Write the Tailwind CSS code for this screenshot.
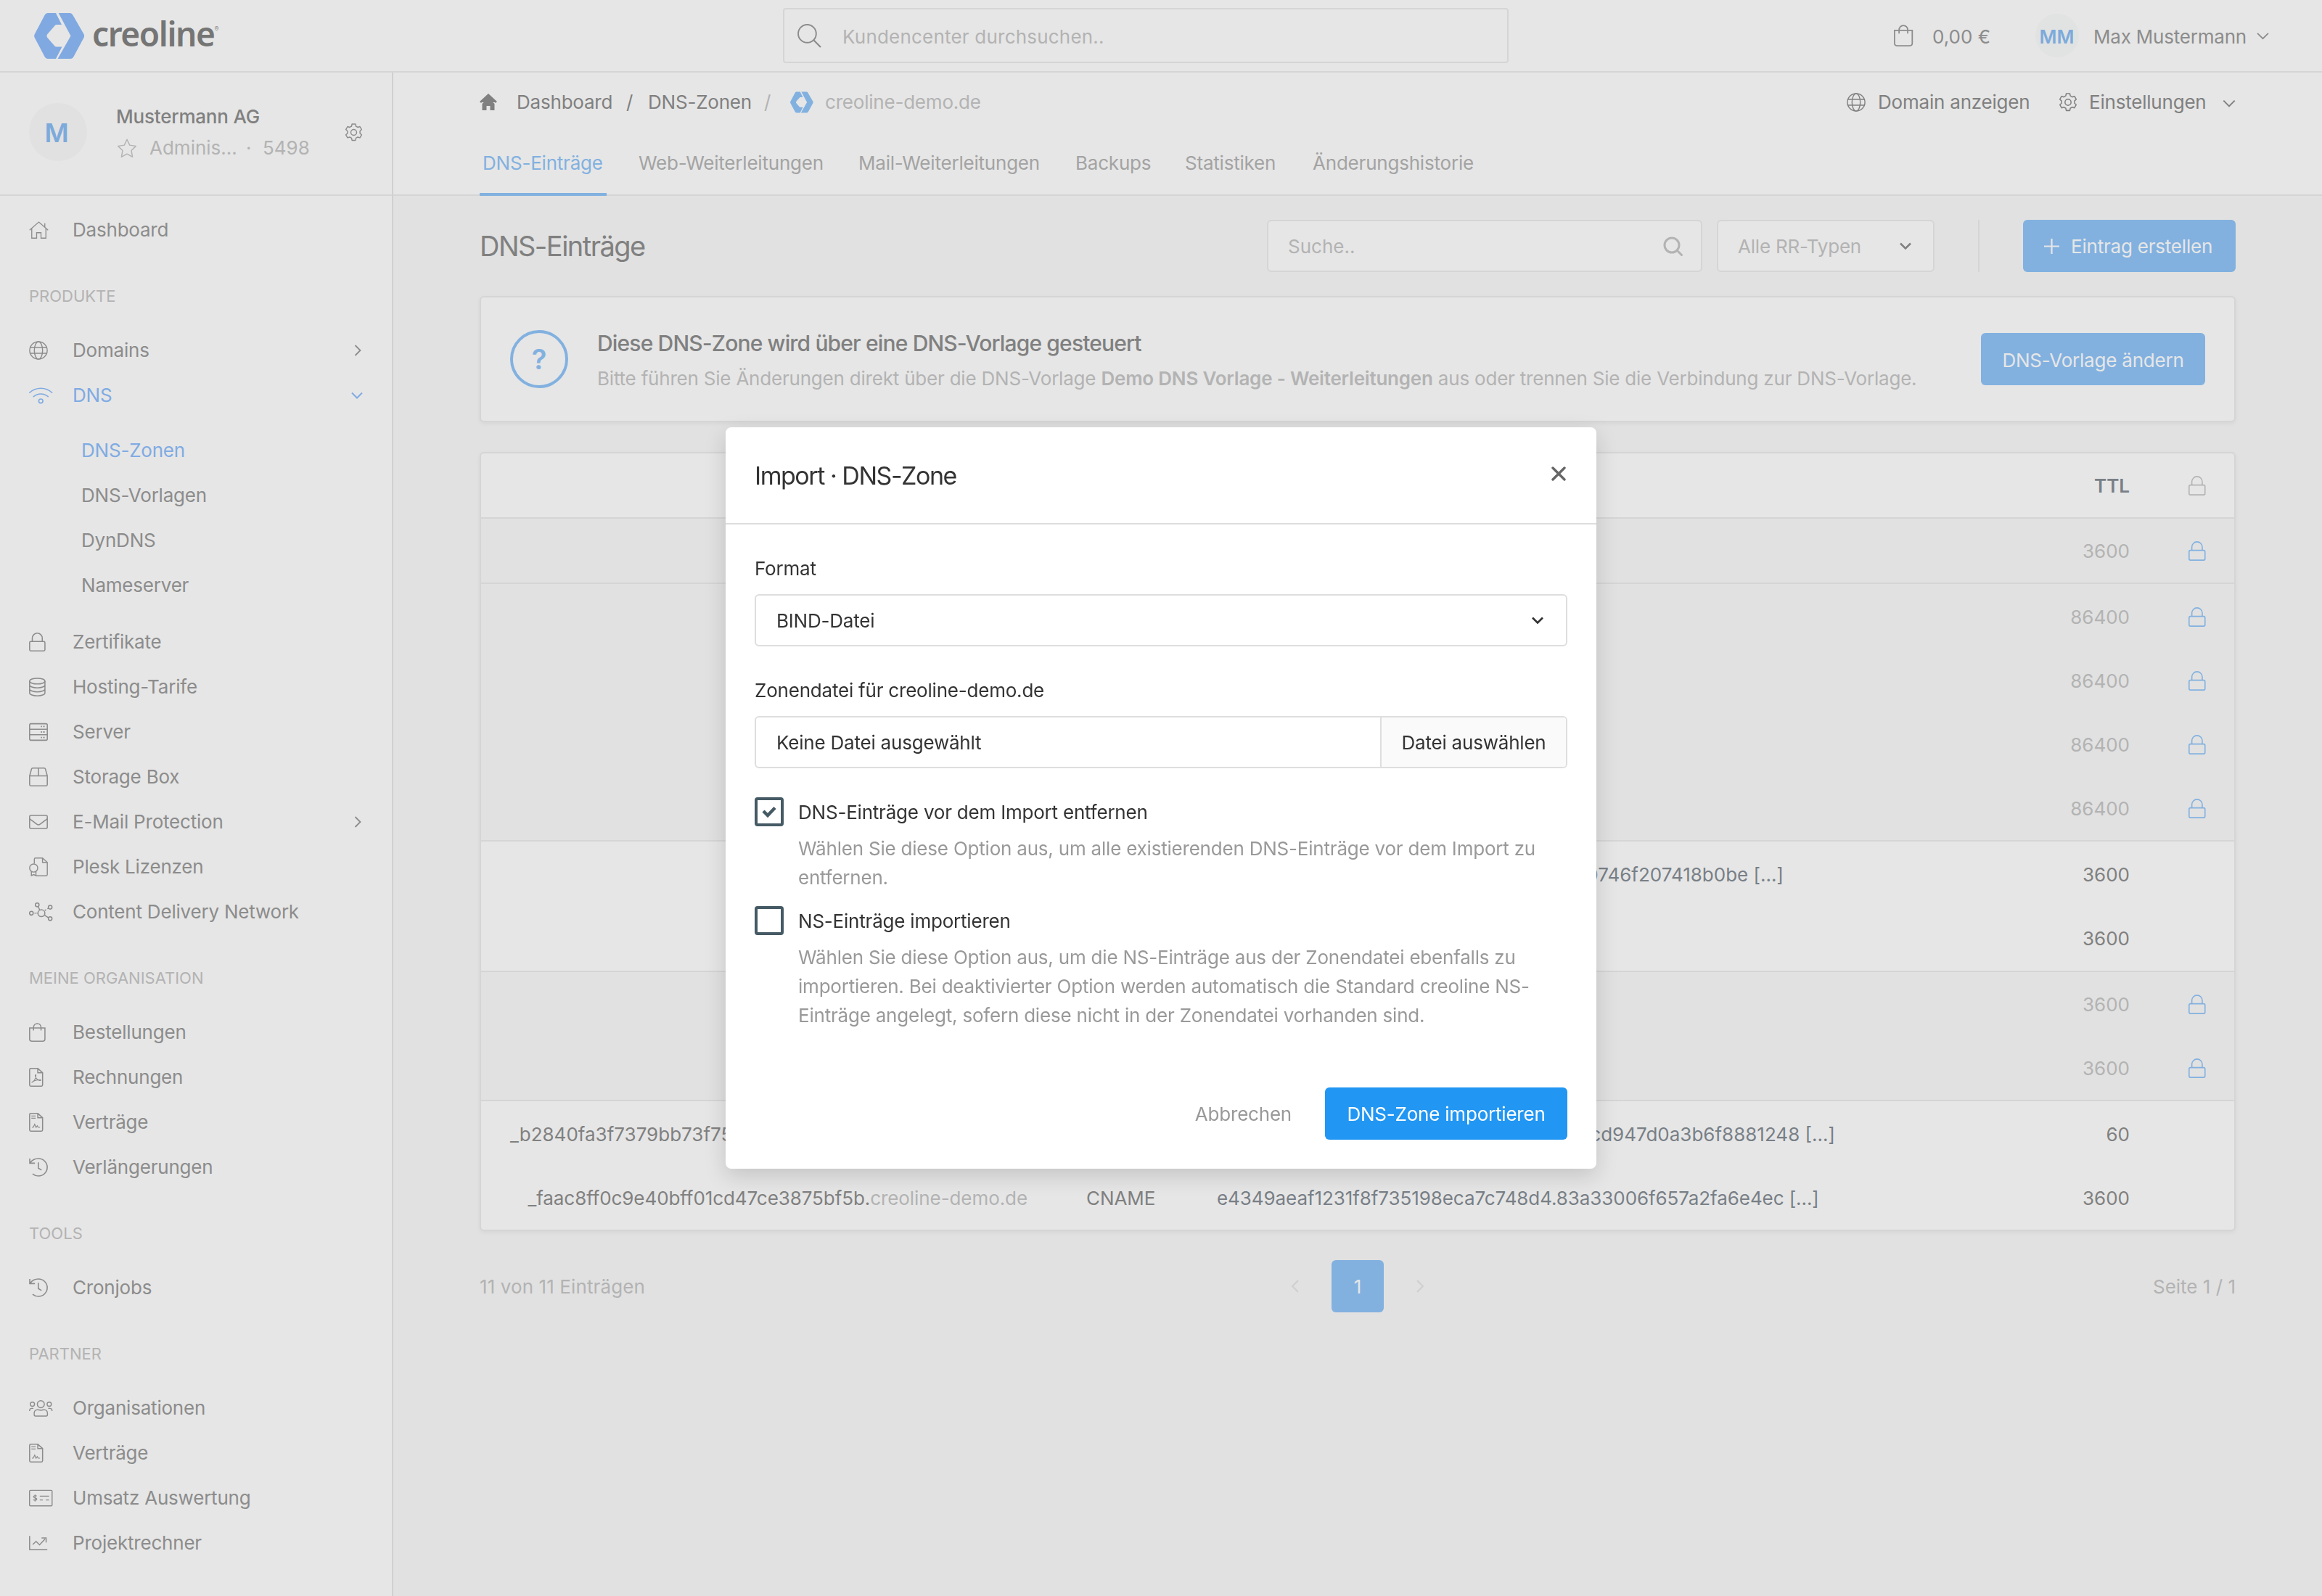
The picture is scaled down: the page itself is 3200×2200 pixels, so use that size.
<!DOCTYPE html>
<html lang="de">

<head>
  <meta charset="UTF-8">
  <meta name="viewport" content="width=device-width, initial-scale=1.0">
  <title>DNS-Einträge · creoline-demo.de</title>
  <script src="https://cdn.jsdelivr.net/npm/@tailwindcss/browser@4"></script>
</head>

<body class="h-[2200px] w-[3200px] overflow-hidden bg-[#e1e1e1] fill-none stroke-current font-['Inter',sans-serif] text-[26px] leading-[40px] tracking-[-0.008em] text-[#808080]">

  <!-- Icons -->
  <svg class="hidden">
    <symbol id="home" viewBox="0 0 576 512" preserveAspectRatio="xMinYMid"><path d="M16 262 288 24l272 238M80 214v282h144V336h128v160h144V214M464 170V56" stroke-width="28"/></symbol>
    <symbol id="globe" viewBox="0 0 512 512" preserveAspectRatio="xMinYMid"><g stroke-width="28"><circle cx="256" cy="256" r="238"/><ellipse cx="256" cy="256" rx="112" ry="238"/><path d="M32 176h448M32 336h448"/></g></symbol>
    <symbol id="wifi" viewBox="0 0 640 512" preserveAspectRatio="xMinYMid"><g stroke-width="32" stroke-linecap="round"><path d="M16 182c170-158 438-158 608 0M124 290c112-98 280-98 392 0"/><circle cx="320" cy="410" r="56"/></g></symbol>
    <symbol id="lock" viewBox="0 0 448 512" preserveAspectRatio="xMinYMid"><g stroke-width="30"><rect x="16" y="240" width="416" height="256" rx="34"/><path d="M88 240v-86c0-76 61-138 136-138s136 62 136 138v86"/></g></symbol>
    <symbol id="database" viewBox="0 0 448 512" preserveAspectRatio="xMinYMid"><g stroke-width="30"><ellipse cx="224" cy="96" rx="208" ry="78"/><path d="M16 96v320c0 43 93 80 208 80s208-37 208-80V96M16 200c0 43 93 80 208 80s208-37 208-80M16 308c0 43 93 80 208 80s208-37 208-80"/></g></symbol>
    <symbol id="server" viewBox="0 0 512 512" preserveAspectRatio="xMinYMid"><g stroke-width="30"><rect x="16" y="32" width="480" height="448" rx="36"/><path d="M16 180h480M16 332h480"/><path d="M320 106h32M384 106h40M320 256h32M384 256h40M320 406h32M384 406h40" stroke-width="38"/></g></symbol>
    <symbol id="box" viewBox="0 0 512 512" preserveAspectRatio="xMinYMid"><path d="M16 226v238q0 32 32 32h416q32 0 32-32V226L444 40q-8-24-32-24H100q-24 0-32 24ZM16 226h480M256 16v210" stroke-width="30"/></symbol>
    <symbol id="mail" viewBox="0 0 512 512" preserveAspectRatio="xMinYMid"><g stroke-width="30"><rect x="16" y="80" width="480" height="352" rx="36"/><path d="M16 168c80 62 140 112 196 150q44 30 88 0c56-38 116-88 196-150"/></g></symbol>
    <symbol id="license" viewBox="0 0 512 512" preserveAspectRatio="xMinYMid"><g stroke-width="28"><path d="M144 168V48q0-32 32-32h190l130 116v332q0 32-32 32H186M366 16v116h130"/><circle cx="126" cy="286" r="110"/><path d="M64 380v112l62-28 62 28V380"/></g></symbol>
    <symbol id="network" viewBox="0 0 640 512" preserveAspectRatio="xMinYMid"><g stroke-width="30"><circle cx="336" cy="292" r="94"/><circle cx="222" cy="66" r="50"/><circle cx="574" cy="130" r="50"/><circle cx="574" cy="440" r="50"/><circle cx="64" cy="292" r="50"/><path d="m246 108 46 98M530 154l-32 16M464 196l-36 22M418 344l110 72M148 292h34M204 292h24"/></g></symbol>
    <symbol id="bag" viewBox="0 0 448 512" preserveAspectRatio="xMinYMid"><path d="M16 136h416v300q0 60-60 60H76q-60 0-60-60ZM122 208v-82c0-60 44-108 102-108s102 48 102 108v82" stroke-width="30"/></symbol>
    <symbol id="pdf" viewBox="0 0 384 512" preserveAspectRatio="xMinYMid"><g stroke-width="30"><path d="M16 48q0-32 32-32h190l130 116v332q0 32-32 32H48q-32 0-32-32ZM238 16v116h130"/><path d="M72 396c60-20 130-130 116-206-30-20-26 70 40 126 40 30 86 40 90 16s-140-16-246 64Z" stroke-width="22"/></g></symbol>
    <symbol id="contract" viewBox="0 0 384 512" preserveAspectRatio="xMinYMid"><g stroke-width="30"><path d="M16 48q0-32 32-32h190l130 116v332q0 32-32 32H48q-32 0-32-32ZM238 16v116h130"/><path d="M64 88h116M64 144h116M80 394h34l40-84 36 84 34-44 24 44h50" stroke-width="24"/></g></symbol>
    <symbol id="history" viewBox="0 0 512 512" preserveAspectRatio="xMinYMid"><path d="M20 20v126h140M30 140C76 66 158 20 256 20c130 0 238 106 238 236S388 492 256 492c-62 0-112-20-160-58M252 122v160l88 50" stroke-width="32"/></symbol>
    <symbol id="users" viewBox="0 0 640 512" preserveAspectRatio="xMinYMid"><g stroke-width="28"><circle cx="320" cy="150" r="96"/><circle cx="92" cy="150" r="58"/><circle cx="548" cy="150" r="58"/><path d="M140 432v-34c0-60 40-98 90-98 30 0 50 14 90 14s60-14 90-14c50 0 90 38 90 98v34q0 40-34 40H174q-34 0-34-40ZM14 336c0-50 24-72 60-72h46M626 336c0-50-24-72-60-72h-46"/></g></symbol>
    <symbol id="check-money" viewBox="0 0 640 512" preserveAspectRatio="xMinYMid"><g stroke-width="28"><rect x="14" y="46" width="612" height="420" rx="24"/><path d="M292 206h252M292 306h84M456 306h88" stroke-width="24"/><path d="M210 204c-40-26-96-10-90 22 8 36 88 18 92 58 2 36-62 40-98 14M164 162v188" stroke-width="24"/></g></symbol>
    <symbol id="chart" viewBox="0 0 512 512" preserveAspectRatio="xMinYMid"><path d="M16 64v370h480M100 296l92-84 94 92 148-156M340 118h124v124" stroke-width="30"/></symbol>
    <symbol id="gear" viewBox="0 0 512 512" preserveAspectRatio="xMinYMid"><g stroke-width="30"><circle cx="256" cy="256" r="82"/><path d="M208 20h96l14 62 52 30 60-20 48 84-46 44v60l46 44-48 84-60-20-52 30-14 62h-96l-14-62-52-30-60 20-48-84 46-44v-60l-46-44 48-84 60 20 52-30Z" stroke-linejoin="round"/></g></symbol>
    <symbol id="star" viewBox="0 0 576 512" preserveAspectRatio="xMinYMid"><path d="m288 20 72 152 164 24-120 118 30 170-146-80-146 80 30-170L52 196l164-24Z" stroke-width="28" stroke-linejoin="round"/></symbol>
    <symbol id="search" viewBox="0 0 512 512" preserveAspectRatio="xMinYMid"><circle cx="208" cy="208" r="192" stroke-width="30"/><path d="m346 346 150 150" stroke-width="34"/></symbol>
    <symbol id="down" viewBox="0 0 16 10"><path d="m1 1.5 7 7 7-7"/></symbol>
    <symbol id="hex" viewBox="0 0 70 63"><path d="M19 0h11l8 16h-7q-2 0-3 2l-10 11.500q-1 2 0 4L28 45q1 1.500 3 1.500h7.500L30 63H19q-3 0-4.500-3L.8 34q-1.300-2.500 0-5L14.500 3Q16 0 19 0ZM33.700 0H49q3 0 4.500 3l15 26q1.300 2.500 0 5L54.500 60Q53 63 50 63H32.500L50.500 31.500Z" fill="currentColor" stroke="none"/></symbol>
  </svg>

  <!-- Kopfzeile -->
  <header class="flex h-[100px] items-center border-b-2 border-[#d5d5d5] bg-[#e6e6e6] pl-[47px] text-[#8c8c8c]">
    <div class="flex w-[1032px] items-center">
      <svg class="h-[63px] w-[70px] text-[#80a9e1]"><use href="#hex"/></svg>
      <span class="mb-[6px] ml-[10px] font-['Noto_Sans'] text-[46px] font-semibold leading-none tracking-[-1.4px] text-[#757575]">creoline</span>
      <span class="mb-[20px] text-[9px] leading-none">®</span>
    </div>
    <div class="flex h-[76px] w-[1000px] items-center rounded-[4px] border-2 border-[#d5d5d5] pl-[18px] text-[#b3b3b3]">
      <svg class="h-[33px] w-[33px] text-[#8c8c8c]"><use href="#search"/></svg>
      <span class="ml-[29px] pt-[3px] tracking-[0.008em]">Kundencenter durchsuchen..</span>
    </div>
    <svg class="ml-[531px] h-[30px] w-[27px]"><use href="#bag"/></svg>
    <span class="ml-[26px] w-[142px] pt-[3px] tracking-normal">0,00 €</span>
    <div class="flex size-[60px] items-center justify-center rounded-full bg-[#e1e2e2] pr-px pt-[3px] font-semibold tracking-normal text-[#7caadb]">MM</div>
    <span class="ml-[20px] w-[209px] whitespace-nowrap pt-[3px]">Max Mustermann</span>
    <svg class="ml-[16px] h-[11px] w-[17px]" stroke-width="1.600"><use href="#down"/></svg>
  </header>

  <div class="flex h-[2100px]">
    <!-- Seitenleiste -->
    <aside class="w-[542px] shrink-0 border-r-2 border-[#d0d0d0] bg-[#e6e6e6] text-[#8c8c8c]">
      <div class="flex h-[170px] items-center border-b-2 border-[#d5d5d5] pl-[40px]">
        <div class="mb-[4px] flex size-[80px] items-center justify-center rounded-full bg-[#e1e1e1] pr-[4px] pt-[2px] text-[36px] font-semibold text-[#7caadb]">M</div>
        <div class="mb-[4px] ml-[40px] w-[315px]">
          <div class="h-[44px] pt-px font-medium text-[#808080]">Mustermann AG</div>
          <div class="flex items-center tracking-normal text-[#b3b3b3]">
            <svg class="h-[27px] w-[30px]"><use href="#star"/></svg>
            <span class="ml-[16px] w-[133px]">Adminis...</span>
            <span class="w-[23px]">·</span>
            <span>5498</span>
          </div>
        </div>
        <svg class="mb-[4px] h-[25px] w-[25px]"><use href="#gear"/></svg>
      </div>

      <nav class="pt-[16px]">
        <a class="flex h-[62px] items-center pl-[40px]"><svg class="h-[24px] w-[60px]"><use href="#home"/></svg>Dashboard</a>

        <h3 class="h-[104px] pl-[40px] pt-[40px] text-[22px] tracking-normal text-[#b3b3b3]">PRODUKTE</h3>
        <a class="flex h-[62px] items-center pl-[40px]"><svg class="h-[26px] w-[60px]"><use href="#globe"/></svg><span class="flex-1">Domains</span><svg class="mr-[39px] h-[10px] w-[16px] -rotate-90" stroke-width="1.800"><use href="#down"/></svg></a>
        <a class="flex h-[62px] items-center pl-[40px] text-[#7fabe3]"><svg class="h-[26px] w-[60px]"><use href="#wifi"/></svg><span class="flex-1">DNS</span><svg class="mr-[40px] h-[10px] w-[16px]" stroke-width="2"><use href="#down"/></svg></a>
        <div class="pb-[16px] pl-[112px] pt-[14px]">
          <a class="flex h-[62px] items-center text-[#7fabe3]">DNS-Zonen</a>
          <a class="flex h-[62px] items-center">DNS-Vorlagen</a>
          <a class="flex h-[62px] items-center">DynDNS</a>
          <a class="flex h-[62px] items-center">Nameserver</a>
        </div>
        <a class="flex h-[62px] items-center pl-[40px]"><svg class="h-[26px] w-[60px]"><use href="#lock"/></svg>Zertifikate</a>
        <a class="flex h-[62px] items-center pl-[40px]"><svg class="h-[26px] w-[60px]"><use href="#database"/></svg>Hosting-Tarife</a>
        <a class="flex h-[62px] items-center pl-[40px]"><svg class="h-[26px] w-[60px]"><use href="#server"/></svg>Server</a>
        <a class="flex h-[62px] items-center pl-[40px]"><svg class="h-[26px] w-[60px]"><use href="#box"/></svg>Storage Box</a>
        <a class="flex h-[62px] items-center pl-[40px]"><svg class="h-[26px] w-[60px]"><use href="#mail"/></svg><span class="flex-1">E-Mail Protection</span><svg class="mr-[39px] h-[10px] w-[16px] -rotate-90" stroke-width="1.800"><use href="#down"/></svg></a>
        <a class="flex h-[62px] items-center pl-[40px]"><svg class="h-[26px] w-[60px]"><use href="#license"/></svg>Plesk Lizenzen</a>
        <a class="flex h-[62px] items-center pl-[40px]"><svg class="h-[26px] w-[60px]"><use href="#network"/></svg>Content Delivery Network</a>

        <h3 class="h-[104px] pl-[40px] pt-[40px] text-[22px] tracking-normal text-[#b3b3b3]">MEINE ORGANISATION</h3>
        <a class="flex h-[62px] items-center pl-[40px]"><svg class="h-[26px] w-[60px]"><use href="#bag"/></svg>Bestellungen</a>
        <a class="flex h-[62px] items-center pl-[40px]"><svg class="h-[26px] w-[60px]"><use href="#pdf"/></svg>Rechnungen</a>
        <a class="flex h-[62px] items-center pl-[40px]"><svg class="h-[26px] w-[60px]"><use href="#contract"/></svg>Verträge</a>
        <a class="flex h-[62px] items-center pl-[40px]"><svg class="h-[26px] w-[60px]"><use href="#history"/></svg>Verlängerungen</a>

        <h3 class="h-[104px] pl-[40px] pt-[40px] text-[22px] tracking-normal text-[#b3b3b3]">TOOLS</h3>
        <a class="flex h-[62px] items-center pl-[40px]"><svg class="h-[26px] w-[60px]"><use href="#history"/></svg>Cronjobs</a>

        <h3 class="h-[104px] pl-[40px] pt-[40px] text-[22px] tracking-normal text-[#b3b3b3]">PARTNER</h3>
        <a class="flex h-[62px] items-center pl-[40px]"><svg class="h-[26px] w-[60px]"><use href="#users"/></svg>Organisationen</a>
        <a class="flex h-[62px] items-center pl-[40px]"><svg class="h-[26px] w-[60px]"><use href="#contract"/></svg>Verträge</a>
        <a class="flex h-[62px] items-center pl-[40px]"><svg class="h-[26px] w-[60px]"><use href="#check-money"/></svg>Umsatz Auswertung</a>
        <a class="flex h-[62px] items-center pl-[40px]"><svg class="h-[26px] w-[60px]"><use href="#chart"/></svg>Projektrechner</a>
      </nav>
    </aside>

    <main class="flex-1">
      <!-- Brotkrumen und Tabs -->
      <div class="h-[170px] border-b-2 border-[#d5d5d5] bg-[#e6e6e6] px-[119px]">
        <div class="flex h-[82px] items-center whitespace-nowrap">
          <svg class="h-[24px] w-[24px]" viewBox="0 0 24 24" fill="currentColor" stroke="none"><path d="M12 6.500 20.500 14v9h-6v-6h-5v6h-6v-9Z" fill="currentColor" stroke="none"/><path d="m1 12 11-10 11 10" stroke="currentColor" stroke-width="2.800"/></svg>
          <span class="ml-[27px] w-[151px]">Dashboard</span>
          <span class="w-[30px]">/</span>
          <span class="w-[160px]">DNS-Zonen</span>
          <span class="w-[36px] text-[#b3b3b3]">/</span>
          <svg class="h-[30px] w-[32px] text-[#82b1e0]"><use href="#hex"/></svg>
          <span class="ml-[16px] flex-1 text-[#b3b3b3]">creoline-demo.de</span>
          <svg class="h-[26px] w-[26px]"><use href="#globe"/></svg>
          <span class="ml-[17px] w-[249px]">Domain anzeigen</span>
          <svg class="h-[26px] w-[26px]"><use href="#gear"/></svg>
          <span class="ml-[16px] w-[184px]">Einstellungen</span>
          <svg class="mt-[2px] h-[11px] w-[18px]" stroke-width="1.800"><use href="#down"/></svg>
        </div>
        <div class="flex h-[88px] items-center whitespace-nowrap text-[#a3a3a3]">
          <div class="mr-[44px] flex h-full w-[175px] items-center border-b-4 border-[#82b1e0] pl-[4px] pt-[2px] text-[#82b1e0]">DNS-Einträge</div>
          <span class="w-[303px] pb-[2px]">Web-Weiterleitungen</span>
          <span class="w-[299px] pb-[2px]">Mail-Weiterleitungen</span>
          <span class="w-[151px] pb-[2px]">Backups</span>
          <span class="w-[176px] pb-[2px]">Statistiken</span>
          <span class="pb-[2px]">Änderungshistorie</span>
        </div>
      </div>

      <div class="px-[119px] pt-[33px]">
        <div class="flex h-[72px] items-center">
          <h1 class="flex-1 text-[38px] tracking-[-0.04em]">DNS-Einträge</h1>
          <div class="flex h-[72px] w-[600px] items-center justify-between rounded-[6px] border-2 border-[#d5d5d5] bg-[#e6e6e6] pl-[27px] pr-[25px] text-[#b3b3b3]"><span class="pt-[2px] tracking-normal">Suche..</span>
            <svg class="h-[27px] w-[27px]" viewBox="0 0 27 27" stroke-width="3"><circle cx="12" cy="12" r="10"/><path d="m19 19 6.500 6.500" stroke-linecap="round"/></svg>
          </div>
          <div class="ml-[20px] flex h-[72px] w-[300px] items-center justify-between rounded-[6px] border-2 border-[#d5d5d5] bg-[#e6e6e6] pl-[27px] pr-[30px] text-[#b3b3b3]"><span class="pt-[2px]">Alle RR-Typen</span>
            <svg class="h-[10px] w-[16px] text-[#808080]" stroke-width="2.500"><use href="#down"/></svg>
          </div>
          <div class="mx-[60px] h-[72px] w-[2px] bg-[#d5d5d5]"></div>
          <button class="flex h-[72px] w-[293px] items-center rounded-[6px] bg-[#82b1e0] pl-[29px] text-[#e6e6e6]">
            <svg class="mr-[16px] h-[21px] w-[21px]" viewBox="0 0 21 21" stroke-width="2.200"><path d="M10.500 0v21M0 10.500h21"/></svg><span class="pt-[2px]">Eintrag erstellen</span>
          </button>
        </div>

        <!-- Hinweis zur DNS-Vorlage -->
        <section class="mt-[33px] flex h-[174px] items-center rounded-[6px] border-2 border-[#d5d5d5] bg-[#e6e6e6] pl-[40px] pr-[40px] shadow-[0_2px_6px_rgba(0,0,0,0.05)]">
          <div class="flex size-[80px] items-center justify-center rounded-full border-4 border-[#82b1e0] text-[38px] font-semibold text-[#82b1e0]">?</div>
          <div class="ml-[40px] flex-1 whitespace-nowrap pt-[4px]">
            <h2 class="h-[49px] text-[30px] font-medium tracking-[-0.028em]">Diese DNS-Zone wird über eine DNS-Vorlage gesteuert</h2>
            <p class="text-[#b3b3b3]">Bitte führen Sie Änderungen direkt über die DNS-Vorlage <b class="font-semibold">Demo DNS Vorlage - Weiterleitungen</b> aus oder trennen Sie die Verbindung zur DNS-Vorlage.</p>
          </div>
          <button class="h-[72px] w-[309px] rounded-[6px] bg-[#82b1e0] pt-[3px] text-[#e6e6e6]">DNS-Vorlage ändern</button>
        </section>

        <!-- Tabelle -->
        <section class="mt-[41px] overflow-hidden rounded-[6px] border-2 border-[#d5d5d5] bg-[#e6e6e6] tracking-normal shadow-[0_2px_6px_rgba(0,0,0,0.05)]">
          <div class="grid h-[90px] grid-cols-[2272px_1fr] items-center border-b-2 border-[#d5d5d5]">
            <span class="pt-[2px] text-right font-semibold text-[#787f86]">TTL</span><svg class="ml-[81px] h-[27px] w-[24px] text-[#b3b3b3]"><use href="#lock"/></svg>
          </div>
          <div class="grid h-[90px] grid-cols-[2272px_1fr] items-center border-b-2 border-[#d5d5d5] bg-[#e1e1e1] text-[#b3b3b3]">
            <span class="pt-[2px] text-right">3600</span><svg class="ml-[81px] h-[27px] w-[24px] text-[#82b1e0]"><use href="#lock"/></svg>
          </div>
          <div class="border-b-2 border-[#d5d5d5] bg-[#e1e1e1] pt-px text-[#b3b3b3]">
            <div class="grid h-[88px] grid-cols-[2272px_1fr] items-center"><span class="pt-[2px] text-right">86400</span><svg class="ml-[81px] h-[27px] w-[24px] text-[#82b1e0]"><use href="#lock"/></svg></div>
            <div class="grid h-[88px] grid-cols-[2272px_1fr] items-center"><span class="pt-[2px] text-right">86400</span><svg class="ml-[81px] h-[27px] w-[24px] text-[#82b1e0]"><use href="#lock"/></svg></div>
            <div class="grid h-[88px] grid-cols-[2272px_1fr] items-center"><span class="pt-[2px] text-right">86400</span><svg class="ml-[81px] h-[27px] w-[24px] text-[#82b1e0]"><use href="#lock"/></svg></div>
            <div class="grid h-[88px] grid-cols-[2272px_1fr] items-center"><span class="pt-[2px] text-right">86400</span><svg class="ml-[81px] h-[27px] w-[24px] text-[#82b1e0]"><use href="#lock"/></svg></div>
          </div>
          <div class="border-b-2 border-[#d5d5d5] pt-[2px]">
            <div class="grid h-[88px] grid-cols-[1795px_477px] items-center text-right"><span class="text-[#787f86]">0746f207418b0be [...]</span><span>3600</span></div>
            <div class="grid h-[88px] grid-cols-[2272px] items-center text-right"><span>3600</span></div>
          </div>
          <div class="border-b-2 border-[#d5d5d5] bg-[#e1e1e1] text-[#b3b3b3]">
            <div class="grid h-[88px] grid-cols-[2272px_1fr] items-center"><span class="pt-[2px] text-right">3600</span><svg class="ml-[81px] h-[27px] w-[24px] text-[#82b1e0]"><use href="#lock"/></svg></div>
            <div class="grid h-[88px] grid-cols-[2272px_1fr] items-center"><span class="pt-[2px] text-right">3600</span><svg class="ml-[81px] h-[27px] w-[24px] text-[#82b1e0]"><use href="#lock"/></svg></div>
          </div>
          <div class="pt-px">
            <div class="grid h-[88px] grid-cols-[753px_1113px_406px] items-center whitespace-nowrap pt-[2px] text-right"><span class="pl-[40px] text-left">_b2840fa3f7379bb73f75</span><span class="text-[#787f86]">cd947d0a3b6f8881248 [...]</span><span>60</span></div>
            <div class="grid h-[88px] grid-cols-[753px_261px_882px_376px] items-center whitespace-nowrap pt-[2px] tracking-[-0.003em]">
              <span class="text-right">_faac8ff0c9e40bff01cd47ce3875bf5b.<span class="text-[#b3b3b3]">creoline-demo.de</span></span>
              <span class="pl-[81px]">CNAME</span>
              <span class="text-[#787f86]">e4349aeaf1231f8f735198eca7c748d4.83a33006f657a2fa6e4ec [...]</span>
              <span class="text-right tracking-normal">3600</span>
            </div>
          </div>
        </section>

        <!-- Seitennavigation -->
        <div class="mt-[40px] grid h-[72px] grid-cols-3 items-center tracking-normal text-[#b3b3b3]">
          <span class="pt-[2px] tracking-[0.004em]">11 von 11 Einträgen</span>
          <div class="flex items-center justify-center gap-[41px]">
            <svg class="h-[12px] w-[18px] rotate-90 text-[#d0d0d0]" stroke-width="2"><use href="#down"/></svg>
            <span class="flex size-[72px] items-center justify-center rounded-[6px] bg-[#82b1e0] pt-[2px] text-[#e6e6e6]">1</span>
            <svg class="h-[12px] w-[18px] -rotate-90 text-[#d0d0d0]" stroke-width="2"><use href="#down"/></svg>
          </div>
          <span class="pt-[2px] text-right">Seite 1 / 1</span>
        </div>
      </div>
    </main>
  </div>

  <!-- Import-Dialog -->
  <div class="fixed inset-0 flex items-start justify-center pt-[589px] text-[#333]">
    <div class="h-[1022px] w-[1200px] rounded-[8px] bg-white shadow-[0_10px_30px_rgba(0,0,0,0.15)]">
      <div class="flex h-[134px] items-center justify-between border-b-2 border-[#dedede] px-[40px]">
        <h2 class="pt-[2px] text-[34px] tracking-[-0.043em]">Import · DNS-Zone</h2>
        <svg class="mb-[4px] mr-[2px] h-[20px] w-[20px] text-[#666]" viewBox="0 0 20 20" stroke-width="3.400" stroke-linecap="round"><path d="m2 2 16 16M18 2 2 18"/></svg>
      </div>
      <div class="px-[40px] pt-[41px]">
        <label class="block">Format</label>
        <div class="mt-[15px] flex h-[72px] items-center justify-between rounded-[6px] border-2 border-[#dedede] pl-[28px] pr-[31px]"><span class="pt-[2px]">BIND-Datei</span>
          <svg class="h-[10px] w-[16px]" stroke-width="2.600"><use href="#down"/></svg>
        </div>
        <label class="mt-[41px] block">Zonendatei für creoline-demo.de</label>
        <div class="mt-[15px] flex h-[72px] items-center overflow-hidden rounded-[6px] border-2 border-[#dedede]">
          <span class="flex-1 pl-[28px] pt-[2px]">Keine Datei ausgewählt</span>
          <span class="flex h-full w-[256px] items-center justify-center border-l-2 border-[#dedede] bg-[#fafafa] pt-[2px]">Datei auswählen</span>
        </div>
        <div class="mt-[40px] flex gap-[20px]">
          <span class="flex size-[40px] shrink-0 items-center justify-center rounded-[4px] border-4 border-[#455a64]">
            <svg class="h-[16px] w-[20px]" viewBox="0 0 20 16" stroke="#455a64" stroke-width="4.500"><path d="m2 7 6 6L18 2.500" stroke="#455a64"/></svg>
          </span>
          <div class="pt-px">
            <div>DNS-Einträge vor dem Import entfernen</div>
            <p class="mt-[10px] text-[#999]">Wählen Sie diese Option aus, um alle existierenden DNS-Einträge vor dem Import zu<br>entfernen.</p>
          </div>
        </div>
        <div class="mt-[19px] flex gap-[20px]">
          <span class="size-[40px] shrink-0 rounded-[4px] border-4 border-[#455a64]"></span>
          <div class="pt-px">
            <div>NS-Einträge importieren</div>
            <p class="mt-[10px] text-[#999]">Wählen Sie diese Option aus, um die NS-Einträge aus der Zonendatei ebenfalls zu<br>importieren. Bei deaktivierter Option werden automatisch die Standard creoline NS-<br>Einträge angelegt, sofern diese nicht in der Zonendatei vorhanden sind.</p>
          </div>
        </div>
        <div class="mt-[79px] flex items-center justify-end">
          <span class="mr-[46px] pt-[2px] text-[#999]">Abbrechen</span>
          <button class="h-[72px] w-[334px] rounded-[6px] bg-[#2196f3] pt-[2px] text-white">DNS-Zone importieren</button>
        </div>
      </div>
    </div>
  </div>
</body>

</html>
